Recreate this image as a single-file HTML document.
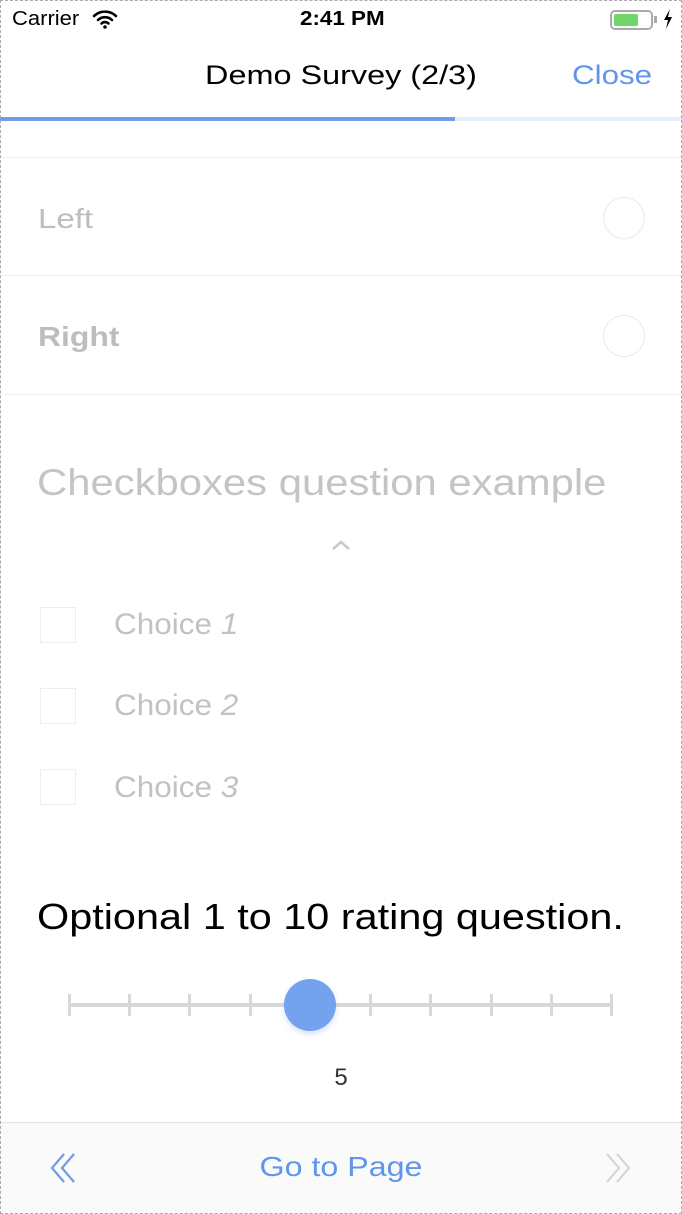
<!DOCTYPE html><html><head><style>
*{margin:0;padding:0;box-sizing:border-box}
body{width:682px;height:1214px;position:relative;overflow:hidden;background:#fff;font-family:"Liberation Sans",sans-serif}
.a{position:absolute;white-space:nowrap}
.s{transform-origin:0 0}
.c{transform-origin:50% 0}
.frame{position:absolute;left:0;top:0;width:682px;height:1214px;border:1px dashed #aaa;pointer-events:none;z-index:9}
.line{position:absolute;left:0;width:682px;height:1px;background:#f0f0f0}
.rad{position:absolute;width:42px;height:42px;border-radius:50%;border:1.5px solid #e4ebf5}
.cb{position:absolute;left:40px;width:36px;height:36px;border:1.5px solid #eee}
.ch{font-size:30px;color:#c2c2c2;left:114px;transform:scaleX(1.05);transform-origin:0 0}
.tick{position:absolute;top:994px;width:3px;height:22px;background:#d8d8d8}
</style></head><body>
<div class="a s" style="left:12px;top:8px;font-size:20px;transform:scaleX(1.1)">Carrier</div>
<svg class="a" style="left:92px;top:9px" width="26" height="20" viewBox="0 0 26 20"><path d="M2 7a16 16 0 0 1 22 0M6 11a10 10 0 0 1 14 0M9.5 14.5a5 5 0 0 1 7 0" stroke="#000" stroke-width="2.6" fill="none" stroke-linecap="round"/><circle cx="13" cy="18" r="1.8"/></svg>
<div class="a s" style="left:300px;top:8px;font-size:20px;font-weight:bold;transform:scaleX(1.12)">2:41 PM</div>
<div class="a" style="left:610px;top:10px;width:43px;height:20px;border:2px solid #aaa;border-radius:5px;padding:2px"><div style="width:24px;height:12px;background:#6fd66a;border-radius:2px"></div></div>
<div class="a" style="left:654px;top:16px;width:3px;height:7px;background:#aaa"></div>
<svg class="a" style="left:663px;top:9px" width="10" height="20"><path d="M7 0L1 11h4l-2 9 6-12H5z" fill="#000"/></svg>
<div class="a c" style="left:0;width:682px;top:60px;text-align:center;font-size:27px;color:#000;transform:scaleX(1.2)">Demo Survey (2/3)</div>
<div class="a s" style="left:572px;top:60px;font-size:27px;color:#5f95ec;transform:scaleX(1.16)">Close</div>
<div class="a" style="left:0;top:117px;width:682px;height:4px;background:#e6eefb"></div>
<div class="a" style="left:0;top:117px;width:455px;height:4px;background:#6f9be8"></div>
<div class="line" style="top:157px"></div>
<div class="a s" style="left:38px;top:203px;font-size:28px;color:#bdbdbd;transform:scaleX(1.18)">Left</div>
<div class="rad" style="left:603px;top:197px"></div>
<div class="line" style="top:275px"></div>
<div class="a s" style="left:38px;top:321px;font-size:28px;color:#bdbdbd;font-weight:bold;transform:scaleX(1.14)">Right</div>
<div class="rad" style="left:603px;top:315px"></div>
<div class="line" style="top:394px"></div>
<div class="a s" style="left:37px;top:462px;font-size:37px;color:#c4c4c4;transform:scaleX(1.13)">Checkboxes question example</div>
<svg class="a" style="left:331px;top:539px" width="20" height="12"><path d="M2 10l8-7 8 7" stroke="#c8c8c8" stroke-width="2.5" fill="none"/></svg>
<div class="cb" style="top:607px"></div><div class="a ch" style="top:608px">Choice <i>1</i></div>
<div class="cb" style="top:688px"></div><div class="a ch" style="top:689px">Choice <i>2</i></div>
<div class="cb" style="top:769px"></div><div class="a ch" style="top:771px">Choice <i>3</i></div>
<div class="a s" style="left:37px;top:896px;font-size:36px;color:#000;transform:scaleX(1.15)">Optional 1 to 10 rating question.</div>
<div class="a" style="left:69px;top:1003px;width:544px;height:4px;background:#d8d8d8"></div>
<div class="tick" style="left:68px"></div><div class="tick" style="left:128px"></div><div class="tick" style="left:188px"></div><div class="tick" style="left:249px"></div><div class="tick" style="left:369px"></div><div class="tick" style="left:429px"></div><div class="tick" style="left:490px"></div><div class="tick" style="left:550px"></div><div class="tick" style="left:610px"></div>
<div class="a" style="left:284px;top:979px;width:52px;height:52px;border-radius:50%;background:#74a2ee;box-shadow:0 3px 6px rgba(116,162,238,.3)"></div>
<div class="a" style="left:0;width:682px;top:1064px;text-align:center;font-size:24px;color:#333">5</div>
<div class="a" style="left:0;top:1122px;width:682px;height:92px;background:#fafafa;border-top:1.5px solid #e2e2e2"></div>
<svg class="a" style="left:48px;top:1152px" width="30" height="32"><path d="M16 2L4 16l12 14M26 2L14 16l12 14" stroke="#6f9be8" stroke-width="2.2" fill="none"/></svg>
<div class="a c" style="left:0;width:682px;top:1151px;text-align:center;font-size:28px;color:#5f95ec;transform:scaleX(1.15)">Go to Page</div>
<svg class="a" style="left:603px;top:1152px" width="30" height="32"><path d="M4 2l12 14L4 30M14 2l12 14-12 14" stroke="#d6d6d6" stroke-width="2.2" fill="none"/></svg>
<div class="frame"></div>
</body></html>
